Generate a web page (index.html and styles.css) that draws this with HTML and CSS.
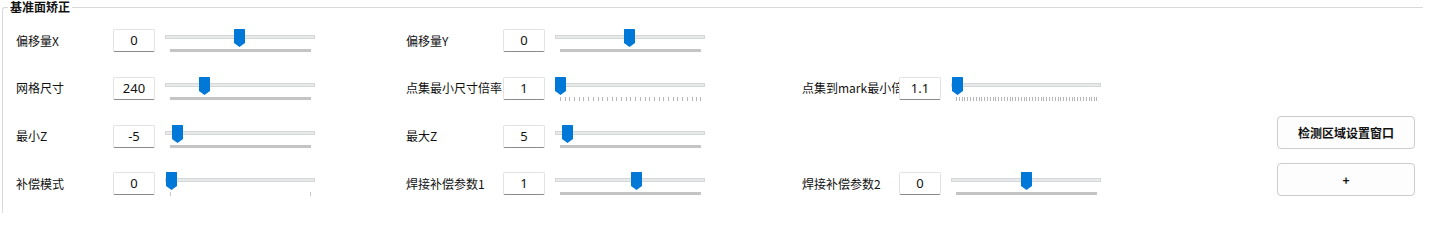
FILE: index.html
```html
<!DOCTYPE html>
<html lang="zh-CN">
<head>
<meta charset="utf-8">
<title>基准面矫正</title>
<link rel="stylesheet" href="styles.css">
</head>
<body>
<fieldset class="group">
  <legend class="group-title">基准面矫正</legend>
  <div class="grid">
    <!-- row 1 -->
    <div class="cell">
      <div class="label">偏移量X</div>
      <div class="box">0</div>
      <div class="slider">
        <div class="track"></div>
        <div class="ticks solid"></div>
        <svg class="thumb" style="left:69px" width="11" height="18" viewBox="0 0 11 18"><path d="M0,0.5 Q0,0 0.5,0 H10.5 Q11,0 11,0.5 V14 L5.5,18 L0,14 Z"/></svg>
      </div>
    </div>
    <div class="cell">
      <div class="label">偏移量Y</div>
      <div class="box">0</div>
      <div class="slider">
        <div class="track"></div>
        <div class="ticks solid"></div>
        <svg class="thumb" style="left:69px" width="11" height="18" viewBox="0 0 11 18"><path d="M0,0.5 Q0,0 0.5,0 H10.5 Q11,0 11,0.5 V14 L5.5,18 L0,14 Z"/></svg>
      </div>
    </div>
    <div class="cell"></div>
    <div class="cell"></div>

    <!-- row 2 -->
    <div class="cell">
      <div class="label">网格尺寸</div>
      <div class="box">240</div>
      <div class="slider">
        <div class="track"></div>
        <div class="ticks solid"></div>
        <svg class="thumb" style="left:34px" width="11" height="18" viewBox="0 0 11 18"><path d="M0,0.5 Q0,0 0.5,0 H10.5 Q11,0 11,0.5 V14 L5.5,18 L0,14 Z"/></svg>
      </div>
    </div>
    <div class="cell">
      <div class="label">点集最小尺寸倍率</div>
      <div class="box">1</div>
      <div class="slider">
        <div class="track"></div>
        <div class="ticks sparse"></div>
        <svg class="thumb" style="left:0px" width="11" height="18" viewBox="0 0 11 18"><path d="M0,0.5 Q0,0 0.5,0 H10.5 Q11,0 11,0.5 V14 L5.5,18 L0,14 Z"/></svg>
      </div>
    </div>
    <div class="cell">
      <div class="label">点集到mark最小倍率</div>
      <div class="box">1.1</div>
      <div class="slider">
        <div class="track"></div>
        <div class="ticks dense"></div>
        <svg class="thumb" style="left:1px" width="11" height="18" viewBox="0 0 11 18"><path d="M0,0.5 Q0,0 0.5,0 H10.5 Q11,0 11,0.5 V14 L5.5,18 L0,14 Z"/></svg>
      </div>
    </div>
    <div class="cell"></div>

    <!-- row 3 -->
    <div class="cell">
      <div class="label">最小Z</div>
      <div class="box">-5</div>
      <div class="slider">
        <div class="track"></div>
        <div class="ticks solid"></div>
        <svg class="thumb" style="left:7px" width="11" height="18" viewBox="0 0 11 18"><path d="M0,0.5 Q0,0 0.5,0 H10.5 Q11,0 11,0.5 V14 L5.5,18 L0,14 Z"/></svg>
      </div>
    </div>
    <div class="cell">
      <div class="label">最大Z</div>
      <div class="box">5</div>
      <div class="slider">
        <div class="track"></div>
        <div class="ticks solid"></div>
        <svg class="thumb" style="left:7px" width="11" height="18" viewBox="0 0 11 18"><path d="M0,0.5 Q0,0 0.5,0 H10.5 Q11,0 11,0.5 V14 L5.5,18 L0,14 Z"/></svg>
      </div>
    </div>
    <div class="cell"></div>
    <div class="cell btn-cell">
      <button class="btn" type="button">检测区域设置窗口</button>
    </div>

    <!-- row 4 -->
    <div class="cell">
      <div class="label">补偿模式</div>
      <div class="box">0</div>
      <div class="slider">
        <div class="track"></div>
        <div class="ticks ends"></div>
        <svg class="thumb" style="left:1px" width="11" height="18" viewBox="0 0 11 18"><path d="M0,0.5 Q0,0 0.5,0 H10.5 Q11,0 11,0.5 V14 L5.5,18 L0,14 Z"/></svg>
      </div>
    </div>
    <div class="cell">
      <div class="label">焊接补偿参数1</div>
      <div class="box">1</div>
      <div class="slider">
        <div class="track"></div>
        <div class="ticks solid"></div>
        <svg class="thumb" style="left:76px" width="11" height="18" viewBox="0 0 11 18"><path d="M0,0.5 Q0,0 0.5,0 H10.5 Q11,0 11,0.5 V14 L5.5,18 L0,14 Z"/></svg>
      </div>
    </div>
    <div class="cell">
      <div class="label">焊接补偿参数2</div>
      <div class="box">0</div>
      <div class="slider">
        <div class="track"></div>
        <div class="ticks solid"></div>
        <svg class="thumb" style="left:70px" width="11" height="18" viewBox="0 0 11 18"><path d="M0,0.5 Q0,0 0.5,0 H10.5 Q11,0 11,0.5 V14 L5.5,18 L0,14 Z"/></svg>
      </div>
    </div>
    <div class="cell btn-cell">
      <button class="btn" type="button">+</button>
    </div>
  </div>
</fieldset>
</body>
</html>
```
FILE: styles.css
```css
html, body {
  margin: 0;
  padding: 0;
  background: #ffffff;
  height: 213px;
}

body {
  font-family: "Noto Sans", "Noto Sans CJK SC", sans-serif;
  font-size: 12px;
  color: #111111;
  overflow: hidden;
}

.group {
  box-sizing: border-box;
  margin: 0 0 0 2px;
  padding: 0;
  width: 1421px;
  height: 213px;
  min-width: 0;
  border: 1px solid #d9d9d9;
  border-right: none;
  border-bottom: none;
  border-top-left-radius: 3px;
}

.group-title {
  margin-left: 5px;
  padding: 0 2px;
  font-family: "Noto Sans CJK SC", sans-serif;
  font-weight: bold;
  font-size: 12px;
  line-height: 14px;
  color: #111111;
}

.grid {
  display: grid;
  grid-template-columns: 390px 396px 475px 138px;
  grid-template-rows: repeat(4, 47.67px);
  padding: 3px 0 0 13px;
}

.cell {
  display: flex;
  align-items: center;
}

.label {
  width: 97px;
  flex: none;
  white-space: nowrap;
  overflow: hidden;
  font-family: "Noto Sans CJK SC", sans-serif;
  font-size: 12px;
  line-height: 16px;
  color: #111111;
}

.box {
  box-sizing: border-box;
  flex: none;
  width: 42px;
  height: 23px;
  border: 1px solid #e3e3e3;
  border-bottom-color: #8a8a8a;
  border-radius: 2px;
  background: #ffffff;
  text-align: center;
  font-family: "Noto Sans", "Noto Sans CJK SC", sans-serif;
  font-size: 13px;
  line-height: 21px;
  color: #111111;
}

.slider {
  position: relative;
  flex: none;
  width: 150px;
  height: 24px;
  margin-left: 10px;
  margin-top: 1px;
}

.track {
  box-sizing: border-box;
  height: 4px;
  margin-top: 6px;
  background: #e7eaea;
  border: 1px solid #d6d6d6;
}

.ticks {
  height: 4px;
  margin: 10px 4px 0 5px;
}

.ticks.solid {
  height: 3px;
  background: #c4c4c4;
}

.ticks.sparse {
  background:
    linear-gradient(#b6b6b6, #b6b6b6) right top / 1px 4px no-repeat,
    repeating-linear-gradient(to right, #b6b6b6 0 1px, transparent 1px 4.7px);
}

.ticks.dense {
  background:
    linear-gradient(#b6b6b6, #b6b6b6) right top / 1px 4px no-repeat,
    repeating-linear-gradient(to right, #b6b6b6 0 1px, transparent 1px 2.82px);
}

.ticks.ends {
  background:
    linear-gradient(#c4c4c4, #c4c4c4) left top / 1px 4px no-repeat,
    linear-gradient(#c4c4c4, #c4c4c4) right top / 1px 4px no-repeat;
}

.thumb {
  position: absolute;
  top: 0;
  display: block;
  fill: #0078d7;
}

.btn-cell {
  align-items: flex-start;
}

.btn {
  box-sizing: border-box;
  width: 138px;
  height: 33px;
  margin-top: 3.5px;
  padding: 0;
  border: 1px solid #cccccc;
  border-radius: 4px;
  background: #fdfdfd;
  font-family: "Noto Sans CJK SC", sans-serif;
  font-weight: bold;
  font-size: 12px;
  color: #111111;
}
```
